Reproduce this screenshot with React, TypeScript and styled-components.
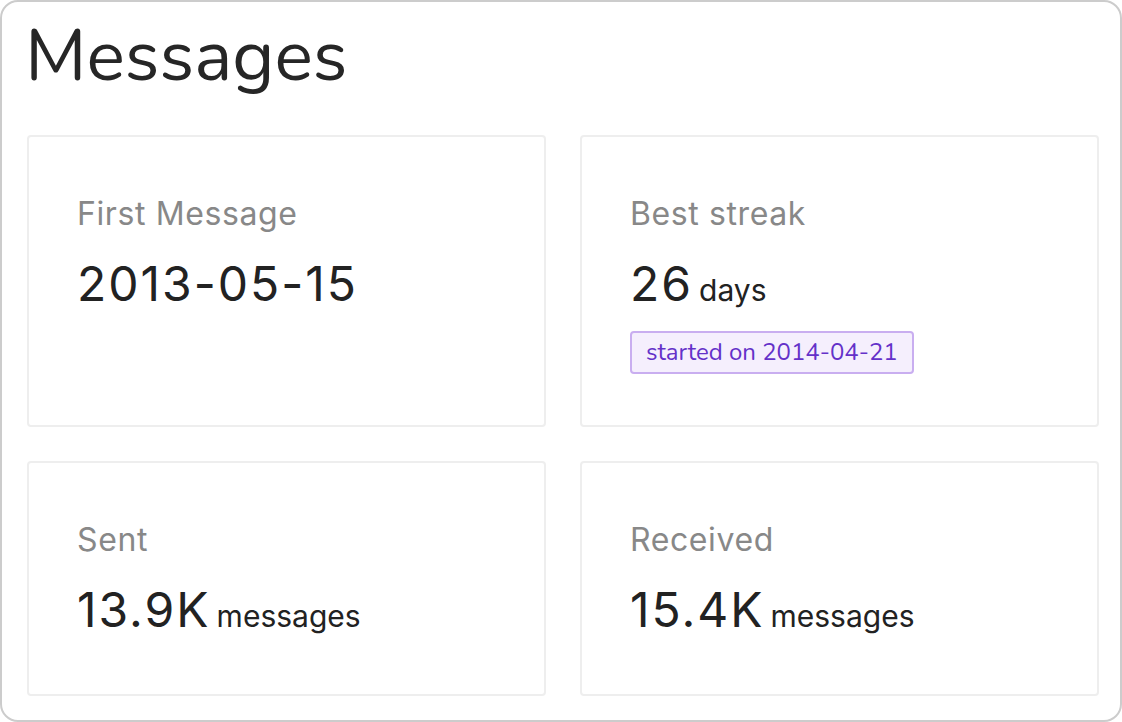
import React from "react";
import styled, { createGlobalStyle } from "styled-components";

const Global = createGlobalStyle`
  html, body { margin: 0; padding: 0; background: #fff; }
  body { font-family: Inter, "Noto Sans", sans-serif; }
  * { box-sizing: border-box; }
`;

const Frame = styled.section`
  width: 1122px;
  height: 722px;
  border: 2px solid #cccccc;
  border-radius: 18px;
  padding: 0 21px 23px 25px;
  display: flex;
  flex-direction: column;
`;

const Title = styled.h1`
  flex-shrink: 0;
  margin: 12px 0 0 -2px;
  height: 121px;
  font-family: "Nunito", "Lato", sans-serif;
  font-weight: 400;
  font-size: 72px;
  line-height: 84px;
  color: #262626;
`;

const Grid = styled.div`
  display: grid;
  grid-template-columns: 1fr 1fr;
  grid-template-rows: 292px 235px;
  column-gap: 34px;
  row-gap: 34px;
`;

const Card = styled.div`
  border: 2px solid #eeeeee;
  border-radius: 4px;
  padding: 54px 48px 0;
  display: flex;
  flex-direction: column;
  align-items: flex-start;
`;

const Label = styled.div`
  font-family: Inter, "Noto Sans", sans-serif;
  font-size: 32px;
  letter-spacing: 0.6px;
  line-height: 45px;
  color: #888888;
`;

const Value = styled.div`
  margin-top: 19px;
  font-family: Inter, "Noto Sans", sans-serif;
  font-size: 48px;
  letter-spacing: 2px;
  line-height: 58px;
  color: #222222;
  white-space: nowrap;
`;

const Unit = styled.span`
  font-size: 30px;
  letter-spacing: 0;
  margin-left: 6px;
`;

const Badge = styled.span`
  margin-top: 12px;
  display: inline-block;
  padding: 6px 14px;
  border: 2px solid #c9aef0;
  border-radius: 4px;
  background: #f5effd;
  color: #6431c9;
  font-family: "Nunito", "Lato", sans-serif;
  font-size: 24px;
  line-height: 27px;
`;

export default function App() {
  return (
    <>
      <Global />
      <Frame>
        <Title>Messages</Title>
        <Grid>
          <Card>
            <Label>First Message</Label>
            <Value>2013-05-15</Value>
          </Card>
          <Card>
            <Label>Best streak</Label>
            <Value>
              26<Unit>days</Unit>
            </Value>
            <Badge>started on 2014-04-21</Badge>
          </Card>
          <Card>
            <Label>Sent</Label>
            <Value>
              13.9K<Unit>messages</Unit>
            </Value>
          </Card>
          <Card>
            <Label>Received</Label>
            <Value>
              15.4K<Unit>messages</Unit>
            </Value>
          </Card>
        </Grid>
      </Frame>
    </>
  );
}
